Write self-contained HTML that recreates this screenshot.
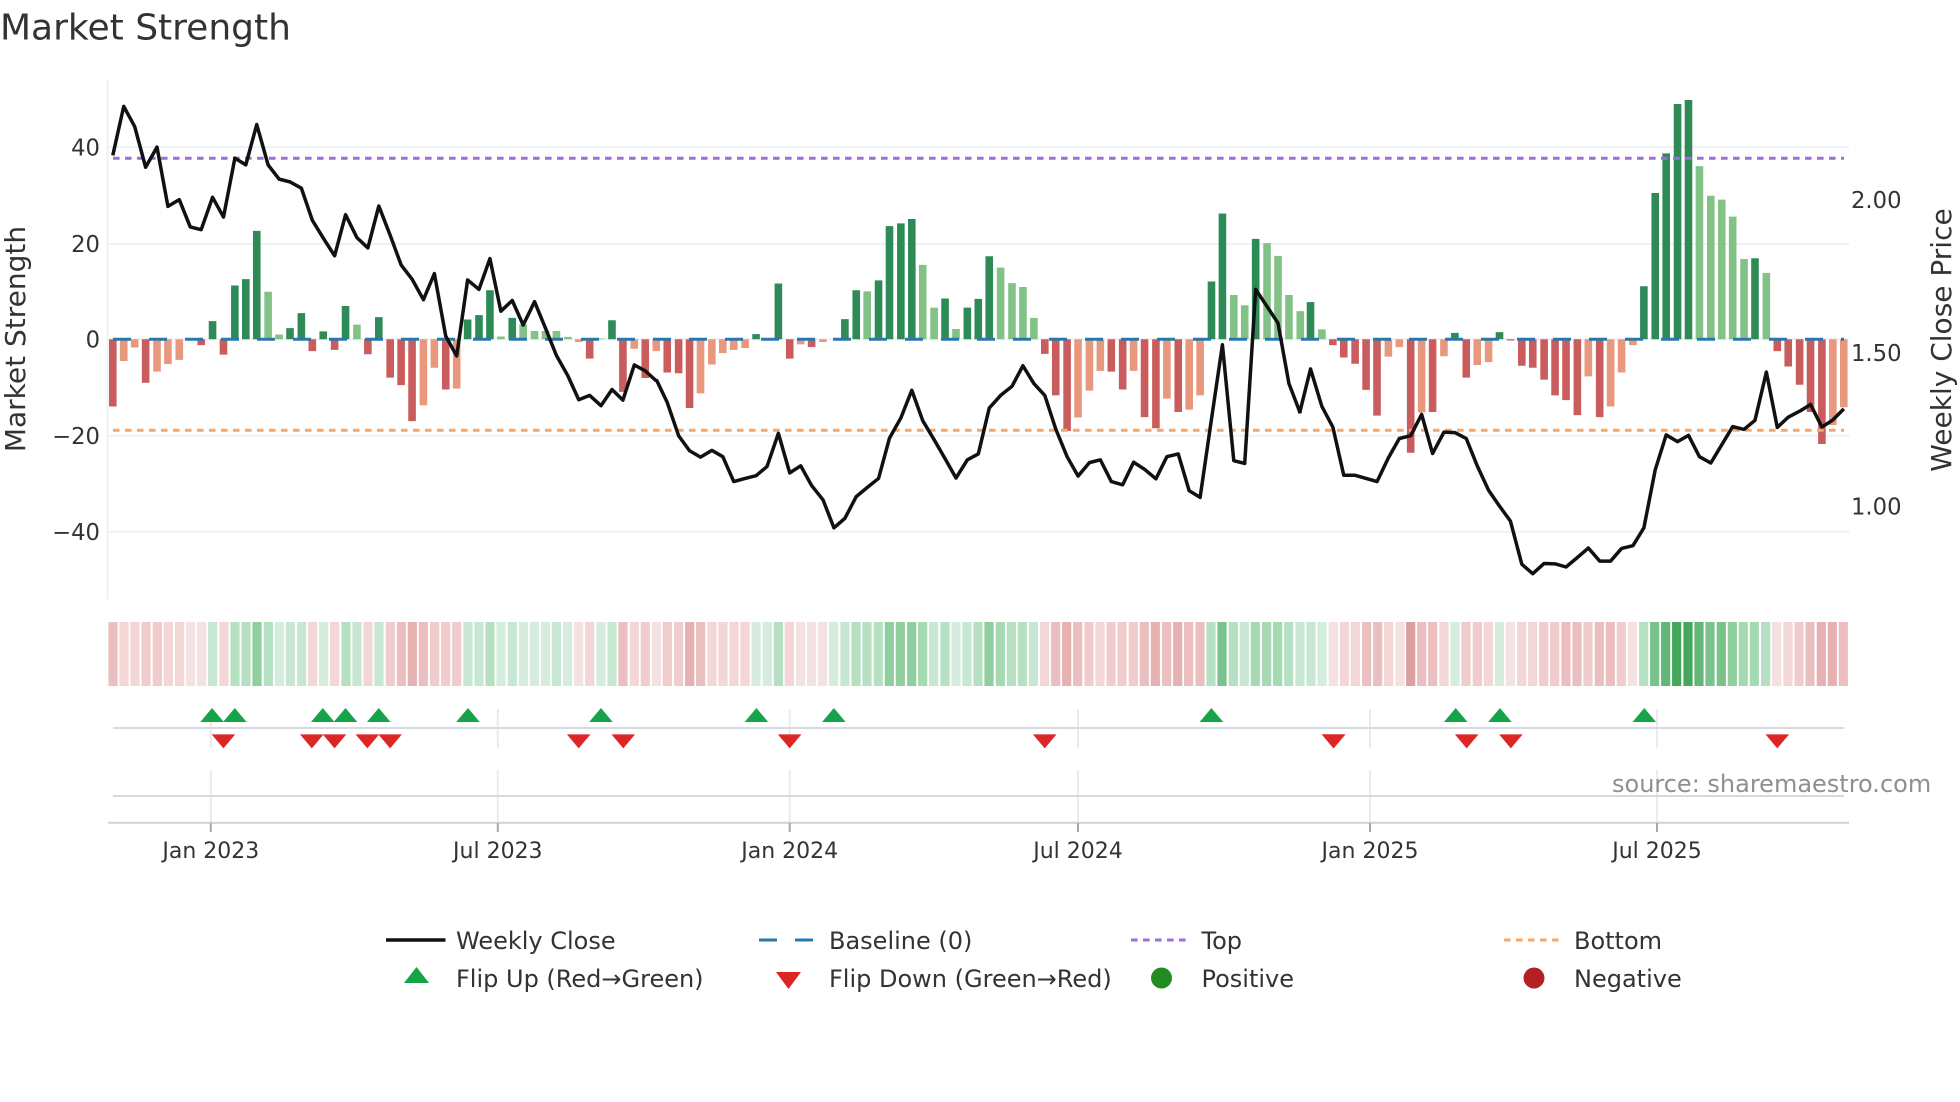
<!DOCTYPE html>
<html><head><meta charset="utf-8"><title>Market Strength</title>
<style>
html,body{margin:0;padding:0;background:#fff}
svg{display:block}
text{font-family:"DejaVu Sans","Liberation Sans",sans-serif;fill:#333}
.b path,.l,.h path,.gl{vector-effect:non-scaling-stroke;fill:none}
.b path{stroke-width:7.6}
.dg{stroke:#2e8b57}.lg{stroke:#82c286}.dr{stroke:#c95c5c}.lr{stroke:#e8987c}
.l{stroke:#111;stroke-width:3.5;stroke-linejoin:round}
.h path{stroke-width:9.2}
.r1{stroke:#f4e1e2}.r2{stroke:#f3d6d6}.r3{stroke:#f0cccc}.r4{stroke:#ebbfbf}.r5{stroke:#e6b1b1}.r6{stroke:#dd9f9f}
.g1{stroke:#d5ecdf}.g2{stroke:#c7e7d3}.g3{stroke:#b5e0c2}.g4{stroke:#a5d9b2}.g5{stroke:#90cea0}.g6{stroke:#79c28b}.g7{stroke:#62b677}.g8{stroke:#45a75a}
.t{font-size:22.7px}.x{font-size:22px;text-anchor:middle}.lg-t{font-size:24px}
</style></head><body>
<svg width="1960" height="1102" viewBox="0 0 1960 1102" xmlns="http://www.w3.org/2000/svg">
<rect width="1960" height="1102" fill="#fff"/>
<text x="0" y="39.5" font-size="36">Market Strength</text>

<g stroke="#eef1f5" stroke-width="2" fill="none">
<path d="M107 147H1849M107 244H1849M107 339.3H1849M107 435.7H1849M107 531.8H1849"/>
<path d="M107.5 80V599" stroke="#eef0f3"/>
</g>

<g class="b" transform="translate(0 0) scale(.4209 .3954)">
<path class="dg" d="M505 858V812M558 858V722M584 858V706M610 858V584M689 858V830M716 858V792M768 858V838M821 858V774M900 858V802M1111 858V808M1138 858V797M1164 858V734M1217 858V804M1454 858V810"/>
<path class="lg" d="M637 858V738M663 858V846M848 858V821M1190 858V851M1243 858V820M1270 858V837M1296 858V837M1322 858V837M1349 858V852M1428 858V856"/>
<path class="dr" d="M268 858V1028M346 858V968M478 858V873M531 858V897M742 858V888M795 858V885M874 858V896M927 858V955M953 858V974M979 858V1065M1059 858V985M1401 858V907M1480 858V991M1533 858V956"/>
<path class="lr" d="M294 858V913M320 858V879M373 858V940M399 858V921M426 858V910M1006 858V1025M1032 858V930M1085 858V983M1375 858V865M1507 858V882"/>
</g>
<g class="b" transform="translate(650 0) scale(.4209 .3954)">
<path class="dg" d="M252 858V845M305 858V717M463 858V807M490 858V734M543 858V709M569 858V572M596 858V565M622 858V554M701 858V755M754 858V778M780 858V756M806 858V648M1334 858V712M1360 858V540M1439 858V604"/>
<path class="lg" d="M516 858V737M648 858V670M675 858V778M727 858V832M833 858V677M860 858V716M886 858V726M912 858V804M1387 858V746M1413 858V772M1466 858V615M1492 858V647M1518 858V746M1545 858V787"/>
<path class="dr" d="M41 858V942M68 858V944M94 858V1032M332 858V907M384 858V878M938 858V895M964 858V1000M991 858V1090M1096 858V940M1123 858V985M1175 858V1055M1202 858V1083M1255 858V1042"/>
<path class="lr" d="M15 858V888M120 858V995M147 858V922M173 858V893M199 858V885M226 858V880M358 858V871M411 858V865M1017 858V1056M1044 858V988M1070 858V938M1149 858V938M1228 858V1008M1281 858V1036M1307 858V1000"/>
</g>
<g class="b" transform="translate(1300 0) scale(.4209 .3954)">
<path class="dg" d="M25 858V764M368 858V842M474 858V840M817 858V724M844 858V488M870 858V388M897 858V263M923 858V253M1081 858V653"/>
<path class="lg" d="M52 858V833M949 858V420M976 858V495M1002 858V505M1028 858V548M1055 858V655M1108 858V690"/>
<path class="dr" d="M78 858V873M104 858V904M131 858V920M157 858V986M183 858V1051M263 858V1145M315 858V1042M395 858V955M500 858V861M527 858V925M553 858V930M580 858V960M606 858V1000M632 858V1012M659 858V1050M712 858V1055M1134 858V888M1160 858V927M1187 858V973M1213 858V1042M1240 858V1123"/>
<path class="lr" d="M210 858V902M236 858V878M289 858V1043M342 858V901M421 858V923M448 858V916M685 858V952M738 858V1028M764 858V942M791 858V873M1266 858V1075M1292 858V1030"/>
</g>

<path d="M113 339.3H1844" stroke="#2a78ab" stroke-width="3" stroke-dasharray="18 18" fill="none"/>
<path d="M113 158.2H1844" stroke="#9c6fd8" stroke-width="3" stroke-dasharray="6.6 5.4" fill="none"/>
<path d="M113 430.2H1844" stroke="#f3a76a" stroke-width="3" stroke-dasharray="6.6 5.4" fill="none"/>

<g transform="translate(0 0) scale(.4209 .3954)">
<polyline class="l" points="268,393 294,269 320,320 346,423 373,372 399,522 426,505 452,574 478,581 505,499 531,549 558,400 584,417 610,315 637,417 663,453 689,460 716,476 742,557 768,602 795,647 821,543 848,601 874,627 900,521 927,595 953,670 979,706 1006,758 1032,692 1059,850 1085,900 1111,708 1138,732 1164,654 1190,787 1217,760 1243,822 1270,763 1296,830 1322,899 1349,950 1375,1011 1401,1000 1428,1026 1454,985 1480,1012 1507,923 1533,938 1559,963"/>
</g>
<g transform="translate(650 0) scale(.4209 .3954)">
<polyline class="l" points="15,960 41,1018 68,1102 94,1140 120,1156 147,1139 173,1155 199,1218 226,1210 252,1203 278,1180 305,1096 332,1196 358,1178 384,1228 411,1264 437,1335 463,1311 490,1256 516,1233 543,1210 569,1108 596,1057 622,987 648,1064 675,1112 701,1160 727,1209 754,1163 780,1148 806,1032 833,1000 860,977 886,925 912,970 938,1000 964,1085 991,1155 1017,1204 1044,1170 1070,1163 1096,1218 1123,1226 1149,1169 1175,1187 1202,1211 1228,1155 1255,1148 1281,1241 1307,1258 1334,1060 1360,872 1387,1165 1413,1172 1439,732 1466,775 1492,817 1518,970 1545,1045"/>
</g>
<g transform="translate(1300 0) scale(.4209 .3954)">
<polyline class="l" points="-1,1045 25,933 52,1028 78,1080 104,1202 131,1202 157,1210 183,1218 210,1158 236,1109 263,1102 289,1048 315,1147 342,1093 368,1094 395,1109 421,1178 448,1240 474,1280 500,1318 527,1427 553,1451 580,1425 606,1426 632,1434 659,1410 685,1386 712,1419 738,1419 764,1387 791,1380 817,1335 844,1188 870,1100 897,1117 923,1101 949,1155 976,1171 1002,1125 1028,1079 1055,1086 1081,1063 1108,941 1134,1081 1160,1055 1187,1040 1213,1023 1240,1080 1266,1062 1292,1034"/>
</g>

<text class="t" x="100" y="155.7" text-anchor="end">40</text>
<text class="t" x="100" y="251.8" text-anchor="end">20</text>
<text class="t" x="100" y="347.5" text-anchor="end">0</text>
<text class="t" x="100" y="444" text-anchor="end">−20</text>
<text class="t" x="100" y="540" text-anchor="end">−40</text>
<text x="25" y="339" font-size="28" text-anchor="middle" transform="rotate(-90 25 339)">Market Strength</text>
<text class="t" x="1851" y="208">2.00</text>
<text class="t" x="1851" y="361">1.50</text>
<text class="t" x="1851" y="514.5">1.00</text>
<text x="1951" y="340" font-size="28" text-anchor="middle" transform="rotate(-90 1951 340)">Weekly Close Price</text>

<g class="h" transform="translate(105 622) scale(.33333 1)">
<path class="r4" d="M24 0v64"/><path class="r2" d="M57 0v64"/><path class="r2" d="M90 0v64"/><path class="r3" d="M123 0v64"/><path class="r3" d="M157 0v64"/><path class="r2" d="M190 0v64"/><path class="r2" d="M224 0v64"/><path class="r1" d="M257 0v64"/><path class="r1" d="M290 0v64"/><path class="g2" d="M323 0v64"/><path class="r2" d="M357 0v64"/><path class="g3" d="M390 0v64"/><path class="g3" d="M423 0v64"/><path class="g5" d="M456 0v64"/><path class="g3" d="M490 0v64"/><path class="g1" d="M523 0v64"/><path class="g2" d="M556 0v64"/><path class="g2" d="M590 0v64"/><path class="r2" d="M623 0v64"/><path class="g1" d="M656 0v64"/><path class="r2" d="M689 0v64"/><path class="g3" d="M723 0v64"/><path class="g2" d="M756 0v64"/><path class="r2" d="M789 0v64"/><path class="g2" d="M822 0v64"/><path class="r3" d="M856 0v64"/><path class="r4" d="M889 0v64"/><path class="r5" d="M922 0v64"/><path class="r4" d="M955 0v64"/><path class="r3" d="M989 0v64"/><path class="r3" d="M1022 0v64"/><path class="r3" d="M1055 0v64"/><path class="g2" d="M1089 0v64"/><path class="g2" d="M1122 0v64"/><path class="g3" d="M1155 0v64"/><path class="g1" d="M1188 0v64"/><path class="g2" d="M1222 0v64"/><path class="g1" d="M1255 0v64"/><path class="g1" d="M1288 0v64"/>
</g>
<g class="h" transform="translate(540 622) scale(.33333 1)">
<path class="g1" d="M16 0v64"/><path class="g2" d="M49 0v64"/><path class="g1" d="M83 0v64"/><path class="r1" d="M116 0v64"/><path class="r2" d="M149 0v64"/><path class="g1" d="M183 0v64"/><path class="g2" d="M216 0v64"/><path class="r4" d="M249 0v64"/><path class="r2" d="M283 0v64"/><path class="r3" d="M316 0v64"/><path class="r1" d="M349 0v64"/><path class="r3" d="M382 0v64"/><path class="r3" d="M416 0v64"/><path class="r5" d="M449 0v64"/><path class="r4" d="M482 0v64"/><path class="r2" d="M516 0v64"/><path class="r2" d="M549 0v64"/><path class="r2" d="M582 0v64"/><path class="r2" d="M615 0v64"/><path class="g1" d="M648 0v64"/><path class="g1" d="M682 0v64"/><path class="g3" d="M715 0v64"/><path class="r2" d="M748 0v64"/><path class="r1" d="M782 0v64"/><path class="r1" d="M815 0v64"/><path class="r1" d="M848 0v64"/><path class="g1" d="M881 0v64"/><path class="g2" d="M915 0v64"/><path class="g3" d="M948 0v64"/><path class="g3" d="M981 0v64"/><path class="g3" d="M1015 0v64"/><path class="g5" d="M1048 0v64"/><path class="g5" d="M1081 0v64"/><path class="g5" d="M1115 0v64"/><path class="g4" d="M1148 0v64"/><path class="g2" d="M1181 0v64"/><path class="g3" d="M1215 0v64"/><path class="g1" d="M1248 0v64"/><path class="g2" d="M1281 0v64"/>
</g>
<g class="h" transform="translate(975 622) scale(.33333 1)">
<path class="g3" d="M9 0v64"/><path class="g5" d="M42 0v64"/><path class="g4" d="M76 0v64"/><path class="g3" d="M109 0v64"/><path class="g3" d="M142 0v64"/><path class="g2" d="M175 0v64"/><path class="r2" d="M209 0v64"/><path class="r4" d="M242 0v64"/><path class="r5" d="M275 0v64"/><path class="r4" d="M308 0v64"/><path class="r3" d="M342 0v64"/><path class="r2" d="M375 0v64"/><path class="r3" d="M408 0v64"/><path class="r3" d="M441 0v64"/><path class="r3" d="M475 0v64"/><path class="r4" d="M508 0v64"/><path class="r5" d="M541 0v64"/><path class="r4" d="M575 0v64"/><path class="r5" d="M608 0v64"/><path class="r4" d="M641 0v64"/><path class="r4" d="M675 0v64"/><path class="g3" d="M708 0v64"/><path class="g6" d="M741 0v64"/><path class="g3" d="M775 0v64"/><path class="g2" d="M808 0v64"/><path class="g4" d="M841 0v64"/><path class="g4" d="M875 0v64"/><path class="g4" d="M908 0v64"/><path class="g3" d="M941 0v64"/><path class="g2" d="M975 0v64"/><path class="g2" d="M1008 0v64"/><path class="g1" d="M1041 0v64"/><path class="r1" d="M1075 0v64"/><path class="r2" d="M1108 0v64"/><path class="r2" d="M1141 0v64"/><path class="r4" d="M1175 0v64"/><path class="r4" d="M1208 0v64"/><path class="r2" d="M1241 0v64"/><path class="r1" d="M1275 0v64"/>
</g>
<g class="h" transform="translate(1410 622) scale(.33333 1)">
<path class="r6" d="M2 0v64"/><path class="r4" d="M35 0v64"/><path class="r4" d="M68 0v64"/><path class="r2" d="M102 0v64"/><path class="g1" d="M135 0v64"/><path class="r3" d="M168 0v64"/><path class="r3" d="M202 0v64"/><path class="r2" d="M235 0v64"/><path class="g1" d="M268 0v64"/><path class="r1" d="M301 0v64"/><path class="r2" d="M335 0v64"/><path class="r2" d="M368 0v64"/><path class="r3" d="M401 0v64"/><path class="r3" d="M434 0v64"/><path class="r4" d="M468 0v64"/><path class="r4" d="M501 0v64"/><path class="r3" d="M534 0v64"/><path class="r4" d="M568 0v64"/><path class="r4" d="M601 0v64"/><path class="r3" d="M634 0v64"/><path class="r1" d="M667 0v64"/><path class="g3" d="M701 0v64"/><path class="g6" d="M734 0v64"/><path class="g7" d="M767 0v64"/><path class="g8" d="M800 0v64"/><path class="g8" d="M834 0v64"/><path class="g7" d="M867 0v64"/><path class="g6" d="M900 0v64"/><path class="g6" d="M934 0v64"/><path class="g5" d="M967 0v64"/><path class="g4" d="M1000 0v64"/><path class="g4" d="M1033 0v64"/><path class="g3" d="M1067 0v64"/><path class="r1" d="M1100 0v64"/><path class="r2" d="M1134 0v64"/><path class="r3" d="M1167 0v64"/><path class="r4" d="M1200 0v64"/><path class="r5" d="M1234 0v64"/><path class="r5" d="M1267 0v64"/><path class="r4" d="M1300 0v64"/>
</g>

<g fill="none" stroke-width="2" stroke="#e8ebef">
<path d="M210.8 709V747.7M497.8 709V747.7M789.7 709V747.7M1078 709V747.7M1370 709V747.7M1657 709V747.7"/>
<path d="M210.8 770V823M497.8 770V823M789.7 770V823M1078 770V823M1370 770V823M1657 770V823"/>
</g>
<path d="M113 728H1844M113 796H1844" stroke="#d6dae0" stroke-width="2" fill="none"/>
<path d="M108 822.7H1849" stroke="#cfd1d4" stroke-width="2" fill="none"/>
<path d="M210.8 823V832M497.8 823V832M789.7 823V832M1078 823V832M1370 823V832M1657 823V832" stroke="#a8a8a8" stroke-width="2" fill="none"/>

<g transform="translate(90 610) scale(.4209 .33333)">
<path fill="#16a34a" d="M262 336L290 294L318 336ZM316 336L344 294L372 336ZM525 336L553 294L581 336ZM579 336L607 294L635 336ZM658 336L686 294L714 336ZM870 336L898 294L926 336ZM1186 336L1214 294L1242 336Z"/>
<path fill="#dc2626" d="M289 373H345L317 415ZM499 373H555L527 415ZM553 373H609L581 415ZM631 373H687L659 415ZM685 373H741L713 415ZM1133 373H1189L1161 415ZM1239 373H1295L1267 415Z"/>
</g>
<g transform="translate(740 610) scale(.4209 .33333)">
<path fill="#16a34a" d="M11 336L39 294L67 336ZM195 336L223 294L251 336ZM1092 336L1120 294L1148 336Z"/>
<path fill="#dc2626" d="M90 373H146L118 415ZM696 373H752L724 415ZM1382 373H1438L1410 415Z"/>
</g>
<g transform="translate(1300 610) scale(.4209 .33333)">
<path fill="#16a34a" d="M342 336L370 294L398 336ZM447 336L475 294L503 336ZM790 336L818 294L846 336Z"/>
<path fill="#dc2626" d="M52 373H108L80 415ZM368 373H424L396 415ZM473 373H529L501 415ZM1106 373H1162L1134 415Z"/>
</g>

<text x="1612" y="792" font-size="24" style="fill:#8f8f8f">source: sharemaestro.com</text>

<text class="x" x="210.8" y="858">Jan 2023</text>
<text class="x" x="497.8" y="858">Jul 2023</text>
<text class="x" x="789.7" y="858">Jan 2024</text>
<text class="x" x="1078" y="858">Jul 2024</text>
<text class="x" x="1370" y="858">Jan 2025</text>
<text class="x" x="1657" y="858">Jul 2025</text>

<path d="M386 940H445.5" stroke="#111" stroke-width="3.5" fill="none"/>
<path d="M759 940H777M795 940H813" stroke="#2a78ab" stroke-width="3" fill="none"/>
<path d="M1131 940H1187" stroke="#9c6fd8" stroke-width="3" stroke-dasharray="6.6 5.4" fill="none"/>
<path d="M1504 940H1560" stroke="#f3a76a" stroke-width="3" stroke-dasharray="6.6 5.4" fill="none"/>
<path d="M404 983L416.5 967L429 983Z" fill="#16a34a"/>
<path d="M776 972H801L788.500 989Z" fill="#dc2626"/>
<circle cx="1161.500" cy="978" r="10.5" fill="#228b22"/>
<circle cx="1534" cy="978" r="10.5" fill="#b22222"/>
<text class="lg-t" x="456" y="949">Weekly Close</text>
<text class="lg-t" x="829" y="949">Baseline (0)</text>
<text class="lg-t" x="1201.500" y="949">Top</text>
<text class="lg-t" x="1574" y="949">Bottom</text>
<text class="lg-t" x="456" y="987">Flip Up (Red→Green)</text>
<text class="lg-t" x="829" y="987">Flip Down (Green→Red)</text>
<text class="lg-t" x="1201.500" y="987">Positive</text>
<text class="lg-t" x="1574" y="987">Negative</text>
</svg>
</body></html>
